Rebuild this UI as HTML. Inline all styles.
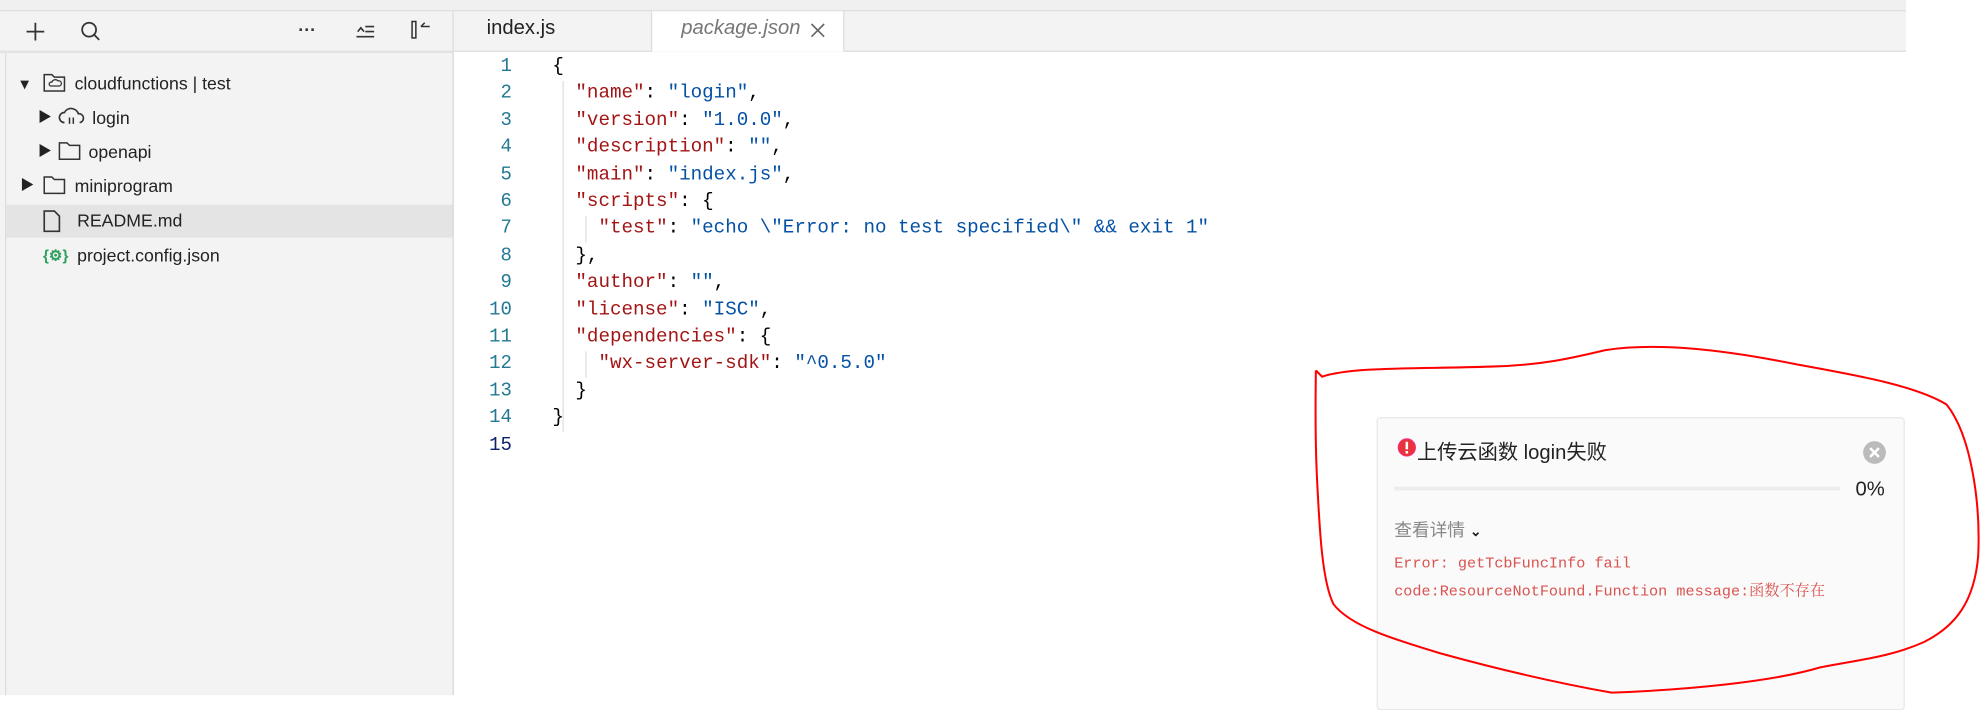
<!DOCTYPE html>
<html><head><meta charset="utf-8">
<style>
html,body{margin:0;padding:0;background:#fff;width:1982px;height:695px;overflow:hidden}
#w{position:absolute;left:0;top:0;width:1568px;height:550px;transform:scale(1.264);transform-origin:0 0;font-family:"Liberation Sans","Noto Sans CJK SC",sans-serif}
.abs{position:absolute}
#top{left:0;top:0;width:1508px;height:8px;background:#f0f0f0;border-bottom:1px solid #ddd}
#side{left:0;top:9px;width:358px;height:541px;background:#f3f3f3;border-right:1px solid #d8d8d8}
#stool{left:0;top:0;width:358px;height:31px;border-bottom:2px solid #e3e3e3}
.tr{position:absolute;font-size:14px;color:#222;height:26px;line-height:26px;white-space:nowrap}
#tabs{left:359px;top:9px;width:1149px;height:31px;background:#f3f3f3;border-bottom:1px solid #ddd}
.code{position:absolute;left:0;font-family:"Liberation Mono",monospace;font-size:15.2px;white-space:pre;line-height:21.4px}
.k{color:#a31515}.s{color:#0451a5}
.ln{position:absolute;width:46px;text-align:right;left:359px;font-family:"Liberation Mono",monospace;font-size:15px;color:#237893;line-height:21.4px}
#card{left:1089px;top:330px;width:416px;height:230px;background:#fafafb;border:1px solid #e8e8e8;border-radius:3px}
</style></head><body><div id="w">
<div class="abs" id="top"></div>
<div class="abs" id="side">
 <div class="abs" id="stool">
  <svg class="abs" style="left:20px;top:8px" width="16" height="16"><path d="M8 1v14M1 8h14" stroke="#333" stroke-width="1.4"/></svg>
  <svg class="abs" style="left:63px;top:7px" width="18" height="18"><circle cx="7.5" cy="7.5" r="5.5" fill="none" stroke="#333" stroke-width="1.4"/><path d="M11.5 11.5l4 4" stroke="#333" stroke-width="1.4"/></svg>
  <div class="abs" style="left:236px;top:6px;font-size:14px;font-weight:bold;color:#333">···</div>
  <svg class="abs" style="left:281px;top:8px" width="16" height="14"><path d="M1 12h14M8 8h7M8 4h7M2 8l2.5-3 2.5 3" stroke="#333" stroke-width="1.3" fill="none"/></svg>
  <svg class="abs" style="left:324px;top:6px" width="18" height="18"><rect x="2" y="2" width="3" height="13" fill="none" stroke="#333" stroke-width="1.2"/><path d="M9 6h7M9 6l3-3" stroke="#333" stroke-width="1.2" fill="none"/></svg>
 </div>
 <div class="abs" style="left:4px;top:33px;width:1px;height:508px;background:#ddd"></div>
</div>
<div class="tr" style="left:16px;top:53px">▾</div>
<svg class="abs" style="left:34px;top:57px" width="18" height="16"><path d="M1 2h6l2 2h8v11H1z" fill="none" stroke="#333" stroke-width="1.2"/><path d="M6 11h7a2 2 0 0 0-1-4 3 3 0 0 0-5 1 1.5 1.5 0 0 0-1 3z" fill="none" stroke="#333" stroke-width="1"/></svg>
<div class="tr" style="left:59px;top:53px">cloudfunctions | test</div>
<div class="tr" style="left:30px;top:80px;font-size:11px">▶</div>
<svg class="abs" style="left:46px;top:84px" width="22" height="16"><path d="M5 13a4 4 0 0 1 0-8 6 6 0 0 1 11 1 3.5 3.5 0 0 1 1 7" fill="none" stroke="#333" stroke-width="1.3"/><path d="M9 9v5M12 9v5" stroke="#333" stroke-width="1.2"/></svg>
<div class="tr" style="left:73px;top:80px">login</div>
<div class="tr" style="left:30px;top:107px;font-size:11px">▶</div>
<svg class="abs" style="left:46px;top:111px" width="18" height="16"><path d="M1 2h6l2 2h8v11H1z" fill="none" stroke="#333" stroke-width="1.2"/></svg>
<div class="tr" style="left:70px;top:107px">openapi</div>
<div class="tr" style="left:16px;top:134px;font-size:11px">▶</div>
<svg class="abs" style="left:34px;top:138px" width="18" height="16"><path d="M1 2h6l2 2h8v11H1z" fill="none" stroke="#333" stroke-width="1.2"/></svg>
<div class="tr" style="left:59px;top:134px">miniprogram</div>
<div class="abs" style="left:5px;top:162px;width:353px;height:26px;background:#e4e4e4"></div>
<svg class="abs" style="left:34px;top:166px" width="14" height="18"><path d="M1 1h8l4 4v12H1z" fill="none" stroke="#333" stroke-width="1.3"/></svg>
<div class="tr" style="left:61px;top:161px">README.md</div>
<div class="tr" style="left:34px;top:189px;color:#2aa05a;font-size:12px;font-weight:bold">{⚙}</div>
<div class="tr" style="left:61px;top:189px">project.config.json</div>

<div class="abs" id="tabs">
 <div class="abs" style="left:26px;top:5px;font-size:16px;color:#222">index.js</div>
 <div class="abs" style="left:156px;top:0;width:151px;height:32px;background:#fff;border-left:1px solid #ddd;border-right:1px solid #ddd"></div>
 <div class="abs" style="left:180px;top:5px;font-size:16px;color:#777;font-style:italic">package.json</div>
 <svg class="abs" style="left:282px;top:9px" width="12" height="12"><path d="M1 1l10 10M11 1L1 11" stroke="#666" stroke-width="1.3"/></svg>
</div>

<div class="abs" style="left:0;top:42px">
<div class="ln" style="top:0">1<br>2<br>3<br>4<br>5<br>6<br>7<br>8<br>9<br>10<br>11<br>12<br>13<br>14<br><span style="color:#0b216f">15</span></div>
<div class="abs" style="left:445px;top:22px;width:1px;height:278px;background:#ddd"></div>
<div class="abs" style="left:463px;top:129px;width:1px;height:21px;background:#ddd"></div>
<div class="abs" style="left:463px;top:236px;width:1px;height:21px;background:#ddd"></div>
<div class="code" style="left:437px;top:0">{
  <span class="k">"name"</span>: <span class="s">"login"</span>,
  <span class="k">"version"</span>: <span class="s">"1.0.0"</span>,
  <span class="k">"description"</span>: <span class="s">""</span>,
  <span class="k">"main"</span>: <span class="s">"index.js"</span>,
  <span class="k">"scripts"</span>: {
    <span class="k">"test"</span>: <span class="s">"echo \"Error: no test specified\" &amp;&amp; exit 1"</span>
  },
  <span class="k">"author"</span>: <span class="s">""</span>,
  <span class="k">"license"</span>: <span class="s">"ISC"</span>,
  <span class="k">"dependencies"</span>: {
    <span class="k">"wx-server-sdk"</span>: <span class="s">"^0.5.0"</span>
  }
}</div>
</div>

<div class="abs" id="card">
 <svg class="abs" style="left:15px;top:15px" width="16" height="16"><circle cx="8" cy="8" r="7" fill="#e8323c" stroke="#f3b" stroke-width=".5"/><rect x="7" y="3.5" width="2" height="6" fill="#fff"/><rect x="7" y="10.8" width="2" height="2" fill="#fff"/></svg>
 <div class="abs" style="left:31px;top:13px;font-size:16px;color:#222;white-space:nowrap">上传云函数 login失败</div>
 <svg class="abs" style="left:383px;top:17px" width="20" height="20"><circle cx="10" cy="10" r="9" fill="#bbb"/><path d="M6.5 6.5l7 7M13.5 6.5l-7 7" stroke="#fff" stroke-width="2"/></svg>
 <div class="abs" style="left:13px;top:54px;width:353px;height:3px;background:#ececec"></div>
 <div class="abs" style="left:378px;top:48px;font-size:16px;color:#222">0%</div>
 <div class="abs" style="left:13px;top:78px;font-size:14px;color:#888;white-space:nowrap">查看详情 <span style="color:#222;font-size:11px;font-weight:bold">⌄</span></div>
 <div class="abs" style="left:13px;top:104px;font-family:'Liberation Mono','Noto Serif CJK SC',monospace;font-size:12px;color:#d9534f;line-height:22px;white-space:pre">Error: getTcbFuncInfo fail
code:ResourceNotFound.Function message:函数不存在</div>
</div>

<svg class="abs" style="left:0;top:0" width="1568" height="550"><path d="M1041 293 L1046 298 C1070 290 1120 292 1180 290 C1220 289 1245 283 1270 277 C1310 271 1360 276 1420 288 C1470 297 1515 305 1540 320 C1560 345 1567 400 1565 440 C1562 475 1548 495 1522 508 C1495 520 1470 522 1440 528 C1400 540 1330 546 1275 548 C1230 540 1180 528 1140 517 C1100 505 1068 495 1055 478 C1046 460 1044 420 1042 380 C1040 340 1041 310 1041 293" fill="none" stroke="#f00" stroke-width="1.6"/></svg>
</div></body></html>
